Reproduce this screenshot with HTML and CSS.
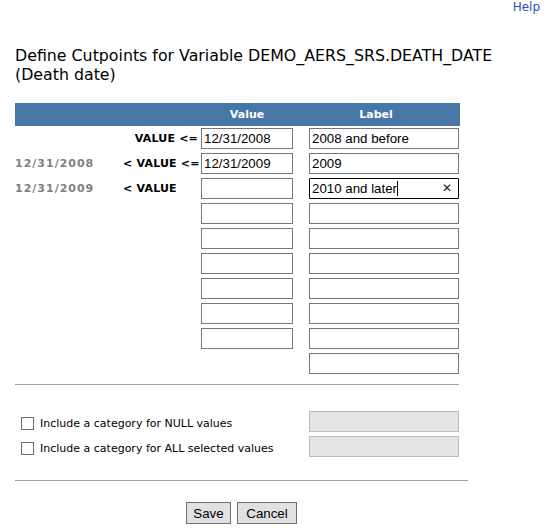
FILE: index.html
```html
<!DOCTYPE html>
<html>
<head>
<meta charset="utf-8">
<link rel="stylesheet" href="styles.css">
</head>
<body>
<div class="topbar"><a class="help" href="#">Help</a></div>
<div class="page">
  <h1 class="title">Define Cutpoints for Variable DEMO_AERS_SRS.DEATH_DATE (Death date)</h1>
  <div class="head">
    <span></span><span></span>
    <span class="hcell">Value</span>
    <span class="hcell hlabel">Label</span>
  </div>
  <div class="rows">
    <div class="row">
      <span class="date"></span>
      <span class="op right">VALUE &lt;=</span>
      <input class="vin" type="text" value="12/31/2008">
      <input class="lin" type="text" value="2008 and before">
    </div>
    <div class="row">
      <span class="date">12/31/2008</span>
      <span class="op right">&lt; VALUE &lt;=</span>
      <input class="vin" type="text" value="12/31/2009">
      <input class="lin" type="text" value="2009">
    </div>
    <div class="row">
      <span class="date">12/31/2009</span>
      <span class="op">&lt; VALUE</span>
      <input class="vin" type="text" value="">
      <div class="focus"><span class="ftext">2010 and later</span><span class="caret"></span><span class="clear">✕</span></div>
    </div>
    <div class="row"><span class="date"></span><span class="op"></span><input class="vin" type="text"><input class="lin" type="text"></div>
    <div class="row"><span class="date"></span><span class="op"></span><input class="vin" type="text"><input class="lin" type="text"></div>
    <div class="row"><span class="date"></span><span class="op"></span><input class="vin" type="text"><input class="lin" type="text"></div>
    <div class="row"><span class="date"></span><span class="op"></span><input class="vin" type="text"><input class="lin" type="text"></div>
    <div class="row"><span class="date"></span><span class="op"></span><input class="vin" type="text"><input class="lin" type="text"></div>
    <div class="row"><span class="date"></span><span class="op"></span><input class="vin" type="text"><input class="lin" type="text"></div>
    <div class="row"><span class="date"></span><span class="op"></span><span class="vin-empty"></span><input class="lin" type="text"></div>
  </div>
  <hr class="rule1">
  <div class="opts">
    <div class="opt">
      <label class="chk"><span class="box"></span>Include a category for NULL values</label>
      <span class="dis"></span>
    </div>
    <div class="opt">
      <label class="chk"><span class="box"></span>Include a category for ALL selected values</label>
      <span class="dis"></span>
    </div>
  </div>
  <hr class="rule2">
  <div class="buttons">
    <button class="btn save" type="button">Save</button>
    <button class="btn cancel" type="button">Cancel</button>
  </div>
</div>
</body>
</html>
```

FILE: styles.css
```css
html, body {
  margin: 0;
  padding: 0;
  background: #ffffff;
  font-family: "DejaVu Sans", Verdana, sans-serif;
  color: #000;
}

.topbar {
  display: flex;
  justify-content: flex-end;
  padding: 0 5px 0 0;
  height: 14px;
}

.help {
  font-size: 12px;
  line-height: 14px;
  color: #2b4fb5;
  text-decoration: none;
  font-family: "DejaVu Sans", Verdana, sans-serif;
}

.page {
  padding: 0 15px;
}

.title {
  margin: 32px 0 0 0;
  width: 525px;
  font-size: 15.8px;
  font-weight: normal;
  line-height: 19px;
  color: #000;
}

.head {
  margin-top: 19px;
  width: 445px;
  height: 23px;
  background: #4677a7;
  display: grid;
  grid-template-columns: 108px 78px 92px 150px;
  align-items: center;
}

.hcell {
  color: #fff;
  font-weight: bold;
  font-size: 11px;
  text-align: center;
}

.hlabel {
  margin-left: 16px;
}

.rows {
  margin-top: 2px;
  display: flex;
  flex-direction: column;
  gap: 4px;
}

.row {
  display: grid;
  grid-template-columns: 108px 78px 92px 150px;
  column-gap: 0;
  align-items: center;
  height: 21px;
}

.row > :nth-child(4) {
  margin-left: 16px;
}

.date {
  color: #808080;
  font-weight: bold;
  font-size: 11px;
  letter-spacing: 1px;
}

.op {
  font-weight: bold;
  font-size: 11px;
  white-space: nowrap;
  padding-right: 3px;
  letter-spacing: 0.2px;
}

.op.right {
  text-align: right;
}

input.vin, input.lin, .focus, .vin-empty {
  box-sizing: border-box;
  height: 21px;
  margin: 0;
  border: 1px solid #767676;
  padding: 1px 2px;
  font-family: "Liberation Sans", Arial, sans-serif;
  font-size: 13.3px;
  color: #000;
  background: #fff;
  outline: none;
}

input.vin { width: 92px; }
input.lin { width: 150px; }

.vin-empty {
  border: none;
  width: 92px;
}

.focus {
  width: 150px;
  border: 1px solid #000;
  border-radius: 1px;
  display: flex;
  align-items: center;
  position: relative;
}

.ftext {
  white-space: nowrap;
}

.caret {
  display: inline-block;
  width: 1px;
  height: 15px;
  background: #000;
}

.clear {
  position: absolute;
  right: 6px;
  top: 2px;
  font-size: 12px;
  font-family: "DejaVu Sans", sans-serif;
  font-weight: bold;
  color: #222;
}

hr {
  border: none;
  height: 1px;
  background: #a0a0a0;
  margin: 0;
}

.rule1 {
  margin-top: 10px;
  width: 444px;
}

.opts {
  margin-top: 26px;
  display: flex;
  flex-direction: column;
  gap: 4px;
}

.opt {
  display: grid;
  grid-template-columns: 294px 150px;
  align-items: center;
  height: 21px;
}

.chk {
  display: flex;
  align-items: center;
  font-size: 11px;
  padding-left: 6px;
  padding-top: 3px;
  color: #000;
}

.box {
  box-sizing: border-box;
  width: 13px;
  height: 13px;
  border: 1px solid #707070;
  background: #fff;
  margin-right: 6px;
}

.dis {
  box-sizing: border-box;
  width: 150px;
  height: 21px;
  border: 1px solid #bcbcbc;
  background: #e4e4e4;
}

.rule2 {
  margin-top: 23px;
  width: 453px;
}

.buttons {
  margin-top: 21px;
  display: flex;
  gap: 6px;
  padding-left: 171px;
}

.btn {
  box-sizing: border-box;
  height: 22px;
  border: 1px solid #707070;
  background: #e1e1e1;
  font-family: "Liberation Sans", Arial, sans-serif;
  font-size: 13.3px;
  color: #000;
  padding: 0 6px;
  border-radius: 0;
}

.save { width: 45px; }
.cancel { width: 60px; }
```
